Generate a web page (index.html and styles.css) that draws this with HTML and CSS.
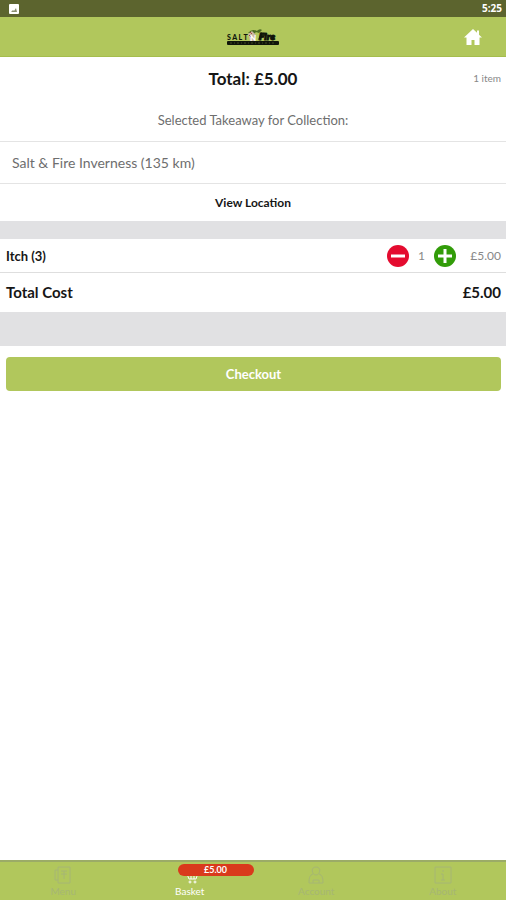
FILE: index.html
```html
<!DOCTYPE html>
<html lang="en">
<head>
<meta charset="utf-8">
<meta name="viewport" content="width=device-width, initial-scale=1">
<title>Basket</title>
<link rel="stylesheet" href="styles.css">
</head>
<body>
<div class="status">
  <svg width="10" height="10" viewBox="0 0 10 10" aria-hidden="true"><rect width="10" height="10" rx="1" fill="#fff"/><path d="M2 8l2-2 1 1 2-3 1 4z" fill="#8b9070"/></svg>
  <time>5:25</time>
</div>
<header class="header">
  <svg class="logo" width="54" height="20" viewBox="0 0 54 20" role="img" aria-label="Salt N Fire">
    <path d="M22 6q4-5 9-2l-3 3zM30 5q3-4 6-2l-3 3z" fill="#4c6b22"/>
    <path d="M22 7l4-3 4 4-2 6h-4z" fill="#c9b9a2"/>
    <path d="M24 5l2 2M23 8l2 2" stroke="#a3483c"/>
    <text class="logo-word" x="1" y="13" fill="#10150a">S A L T</text>
    <text class="logo-n" x="24" y="14" fill="#fff">N</text>
    <path d="M32 13l3-8 2 2 4-1-1 2z" fill="#26330f"/>
    <text class="logo-fire" x="33" y="13" fill="#10150a" stroke="#10150a">Fire</text>
    <rect x="1" y="14" width="52" height="4" rx="1" fill="#10150a"/>
    <path d="M4 16h46" stroke="#414b22" stroke-dasharray="2 2 1 2"/>
  </svg>
  <a class="home" href="#home" aria-label="Home">
    <svg width="18" height="16" viewBox="0 0 18 16"><path d="M9 0L0 8.500h2.500V16h5v-5h3v5h5V8.500H18L15 5.700V1.500h-2v2.300z" fill="#fff"/></svg>
  </a>
</header>
<main class="main">
  <section class="summary">
    <h1>Total: £5.00</h1>
    <span class="count">1 item</span>
  </section>
  <p class="prompt">Selected Takeaway for Collection:</p>
  <p class="place">Salt &amp; Fire Inverness (135 km)</p>
  <a class="location" href="#location">View Location</a>
  <div class="band"></div>
  <section class="item">
    <h2>Itch (3)</h2>
    <button class="step" aria-label="Remove one"><svg width="22" height="22" viewBox="0 0 22 22"><circle cx="11" cy="11" r="11" fill="#e40b2f"/><path d="M4 11h14" stroke="#fff" stroke-width="3"/></svg></button>
    <span class="qty">1</span>
    <button class="step" aria-label="Add one"><svg width="22" height="22" viewBox="0 0 22 22"><circle cx="11" cy="11" r="11" fill="#329c09"/><path d="M4 11h14M11 4v14" stroke="#fff" stroke-width="3"/></svg></button>
    <span class="price">£5.00</span>
  </section>
  <section class="total"><span>Total Cost</span><span>£5.00</span></section>
  <div class="band band-tall"></div>
  <button class="checkout">Checkout</button>
</main>
<nav class="tabs">
  <a class="tab" href="#menu">
    <svg width="18" height="18" viewBox="0 0 18 18"><path d="M4 1h12v16H4zM4 4H1v10h3M7 5h6M7 8h6M10 5v8" /></svg>
    <span>Menu</span>
  </a>
  <a class="tab tab-active" href="#basket">
    <svg width="18" height="18" viewBox="0 0 18 18"><path d="M1 3h3l4 10h7l2-6H6M10 7v6M13 7v6"/><circle cx="9" cy="16" r="1"/><circle cx="14" cy="16" r="1"/></svg>
    <span>Basket</span>
    <b class="badge">£5.00</b>
  </a>
  <a class="tab" href="#account">
    <svg width="18" height="18" viewBox="0 0 18 18"><path d="M9 1c6 0 4 8 0 8s-6-8 0-8zM6 8c-3 1-4 3-4 9h14c0-6-1-8-4-9M6 17v-3h6v3"/></svg>
    <span>Account</span>
  </a>
  <a class="tab" href="#about">
    <svg width="18" height="18" viewBox="0 0 18 18"><path d="M1 1h16v16H1zM9 4v2M7 8h2v6M7 14h4"/></svg>
    <span>About</span>
  </a>
</nav>
</body>
</html>
```
FILE: styles.css
```css
* { box-sizing: border-box; }
body {
  margin: 0;
  min-height: 100vh;
  display: flex;
  flex-direction: column;
  background: #fff;
  color: #161616;
  font-family: Lato, "Liberation Sans", sans-serif;
}
h1, h2, p { margin: 0; font-weight: 700; }
a { color: inherit; text-decoration: none; }
button { font-family: inherit; border: 0; padding: 0; cursor: pointer; }
svg { display: block; }
.status {
  height: 17px;
  padding: 0 4px 0 9px;
  display: flex;
  align-items: center;
  justify-content: space-between;
  background: #5c642e;
  color: #fff;
  font: 700 10px/17px "Open Sans", sans-serif;
}
.header {
  height: 40px;
  padding: 0 24px;
  display: grid;
  grid-template-columns: 1fr auto 1fr;
  align-items: center;
  background: #b1c75c;
  border-bottom: 1px solid #a5bd4d;
}
.logo { grid-column: 2; }
.logo-word { font: 900 7px Lato, sans-serif; }
.logo-n { font: 900 8px Lato, sans-serif; }
.logo-fire { font: italic 900 10px Lato, sans-serif; }
.home { justify-self: end; }
.main { flex: 1; }
.summary {
  height: 42px;
  padding: 0 5px;
  display: grid;
  grid-template-columns: 1fr auto 1fr;
  align-items: center;
}
.summary h1 { grid-column: 2; font-size: 17px; }
.count { justify-self: end; font-size: 10px; color: #888; }
.prompt {
  font-size: 13px;
  line-height: 42px;
  font-weight: 400;
  text-align: center;
  color: #6e6e6e;
}
.place {
  padding: 0 12px;
  border: solid #e4e4e4;
  border-width: 1px 0;
  font-size: 14px;
  line-height: 41px;
  font-weight: 400;
  color: #6e6e6e;
}
.location {
  display: block;
  font-size: 12px;
  line-height: 37px;
  font-weight: 700;
  text-align: center;
}
.band { height: 18px; background: #e1e1e3; }
.band-tall { height: 34px; }
.item {
  height: 34px;
  padding: 0 5px 0 6px;
  display: flex;
  align-items: center;
  border-bottom: 1px solid #dedede;
}
.item h2 { flex: 1; font-size: 13px; }
.step { background: none; border-radius: 50%; }
.qty { width: 25px; text-align: center; font-size: 12px; color: #888; }
.price { width: 45px; text-align: right; font-size: 12px; color: #888; }
.total {
  padding: 0 5px 0 6px;
  display: flex;
  justify-content: space-between;
  font-size: 15px;
  line-height: 39px;
  font-weight: 700;
}
.checkout {
  display: block;
  width: calc(100% - 11px);
  height: 34px;
  margin: 11px 5px 0 6px;
  border-radius: 4px;
  background: #b1c75c;
  color: #fff;
  font-size: 13px;
  font-weight: 700;
}
.tabs {
  height: 40px;
  display: grid;
  grid-template-columns: repeat(4, 1fr);
  background: #b1c75c;
  border-top: 2px solid #9bab67;
}
.tab {
  position: relative;
  padding-top: 4px;
  display: flex;
  flex-direction: column;
  align-items: center;
  font-size: 10px;
  line-height: 15px;
  color: #a6b674;
}
.tab svg { fill: none; stroke: currentColor; }
.tab-active { color: #fff; }
.badge {
  position: absolute;
  top: 2px;
  left: 51px;
  width: 76px;
  border-radius: 6px;
  background: #d93a1c;
  font-size: 9px;
  line-height: 12px;
  text-align: center;
}
```
